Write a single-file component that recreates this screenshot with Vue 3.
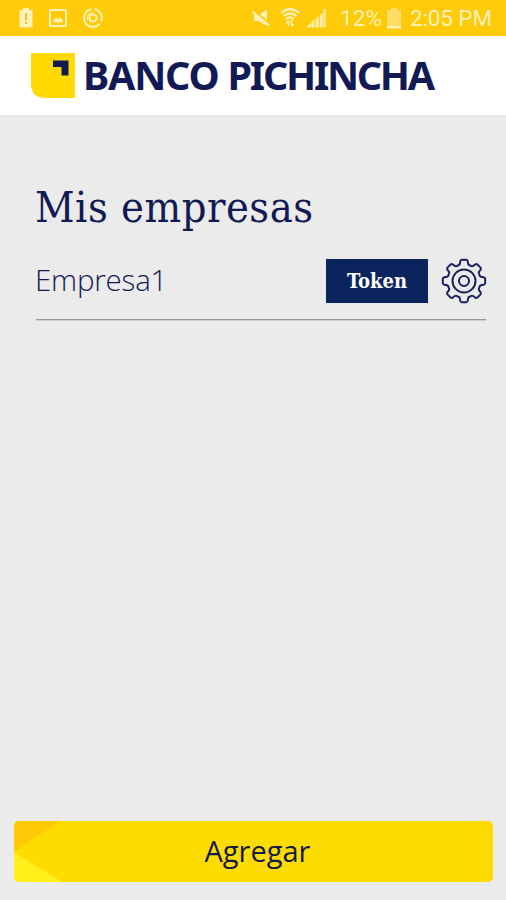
<template>
  <div class="screen">
    <div class="status-bar">
      <div class="status-left">
        <svg width="14" height="20" viewBox="0 0 14 20">
          <path d="M4 0h6v2h3.500v17.500H.5V2H4z" fill="#fff1b8" />
          <path d="M7 5v7M7 14v2" stroke="#e9b400" stroke-width="1.600" />
        </svg>
        <svg width="18" height="18" viewBox="0 0 18 18">
          <rect x="1" y="1" width="16" height="16" rx="1.500" fill="none" stroke="#fff1b8" stroke-width="2" />
          <path d="M4.500 13.500V11l2.500-2.500 2 1.500 2-1.500 2.500 2.500v2.500z" fill="#fff1b8" />
        </svg>
        <svg width="20" height="20" viewBox="0 0 20 20" fill="none" stroke="#fff1b8" stroke-width="2">
          <path d="M8.500 1.200A8.900 8.900 0 1 0 16.800 15.600M18 13.500A8.900 8.900 0 0 0 11.500 1.200" />
          <circle cx="10" cy="10" r="3.500" />
          <path d="M5 12.500a5.500 5.500 0 0 1 5-8" stroke-width="1.200" />
        </svg>
      </div>
      <div class="status-right">
        <svg class="mute" width="19" height="19" viewBox="0 0 19 19">
          <path d="M2 6h4.500L15 .5v16.500l-8.500-5H2z" fill="#fff1b8" />
          <path d="M2 1.500l16 13.500" stroke="#ffca08" stroke-width="2" />
          <path d="M.5 2.500l16.500 14" stroke="#fff1b8" stroke-width="2" />
        </svg>
        <svg class="wifi" width="20" height="20" viewBox="0 0 20 20" fill="none" stroke="#fff1b8" stroke-width="2.200">
          <path d="M1 5q9-7.500 18 0M3.500 8q6.500-5 13 0M6 11q4-3 8 0" />
          <path d="M8.500 18v-5M6.500 15l2-2.200M11.500 12v6M13.500 16l-2 2.200" stroke-width="1.700" />
        </svg>
        <svg class="signal" width="20" height="19" viewBox="0 0 20 19" fill="#fff1b8">
          <path d="M0 18.500V17l4-3v4.500zM4.500 18.500V13l3-2.500v8zM8.500 18.500V9.500l3.300-2v11zM12.700 18.500V6L15.800 4v14.500z" opacity=".9" />
          <path d="M16.300 0H19v18.500h-2.700z" opacity=".75" />
        </svg>
        <span class="percent">12%</span>
        <svg class="battery" width="14" height="21" viewBox="0 0 14 21">
          <path d="M4 0h6v2h4v16H0V2h4z" fill="#ffdd66" />
          <path d="M0 18h14v2.500H0z" fill="#fff1b8" />
        </svg>
        <span class="time">2:05 PM</span>
      </div>
    </div>

    <header class="header">
      <svg class="logo" width="44" height="45" viewBox="0 0 44 45">
        <path d="M0 0h44v45H15Q0 45 0 31z" fill="#ffd900" />
        <path d="M22 7.500h15.500v15H30.500V14H22z" fill="#0f1c54" />
      </svg>
      <span class="brand">BANCO <span class="brand-name">PICHINCHA</span></span>
    </header>

    <main class="content">
      <h1 class="title">Mis empresas</h1>
      <div v-for="company in companies" :key="company" class="company">
        <span class="company-name">{{ company }}</span>
        <button class="token">Token</button>
        <svg class="gear" width="46" height="46" viewBox="-23 -23 46 46" fill="none" stroke="#1b2260" stroke-width="2">
          <path :d="gearPath" stroke-linejoin="round" />
          <circle r="11.500" />
          <circle r="5" />
        </svg>
      </div>
    </main>

    <footer class="footer">
      <button class="add">
        <svg class="add-corner" width="48" height="61" viewBox="0 0 48 61">
          <path d="M0 0h46L0 31z" fill="#ffc907" />
          <path d="M0 31l48 30H0z" fill="#fff01c" />
        </svg>
        <span class="add-label">Agregar</span>
      </button>
    </footer>
  </div>
</template>

<script setup>
const companies = ['Empresa1']

function polar(radius, degrees) {
  const a = (degrees * Math.PI) / 180
  return `${(radius * Math.sin(a)).toFixed(2)} ${(-radius * Math.cos(a)).toFixed(2)}`
}

// Eight teeth joined by rounded valleys
const parts = []
for (let i = 0; i < 8; i++) {
  const t = i * 45
  parts.push(`${i ? 'L' : 'M'}${polar(20, t - 11)}`)
  parts.push(`Q${polar(21.3, t - 9.5)} ${polar(21.3, t - 6)}`)
  parts.push(`L${polar(21.3, t + 6)}`)
  parts.push(`Q${polar(21.3, t + 9.5)} ${polar(20, t + 11)}`)
  parts.push(`Q${polar(16, t + 14)} ${polar(16.7, t + 22.5)}`)
  parts.push(`Q${polar(16, t + 31)} ${polar(20, t + 34)}`)
}
const gearPath = parts.join('') + 'Z'
</script>

<style>
body {
  margin: 0;
}
</style>

<style scoped>
.screen {
  display: flex;
  flex-direction: column;
  width: 506px;
  height: 900px;
  background: #ebebeb;
  color: #111a54;
  overflow: hidden;
}

.status-bar {
  display: flex;
  justify-content: space-between;
  align-items: center;
  box-sizing: border-box;
  height: 36px;
  padding: 0 14px 0 19px;
  background: #ffca08;
  color: #fff1b8;
  font-family: Roboto, sans-serif;
  font-size: 22.500px;
}

.status-left,
.status-right {
  display: flex;
  align-items: center;
}

.status-left {
  gap: 16px;
}

.wifi {
  margin-left: 9px;
}

.signal {
  margin-left: 7px;
}

.percent {
  margin-left: 13px;
}

.battery {
  margin-left: 5px;
}

.time {
  margin-left: 9px;
  letter-spacing: -0.1px;
}

.header {
  display: flex;
  align-items: center;
  box-sizing: border-box;
  height: 79px;
  padding-left: 31px;
  background: #fff;
}

.logo {
  margin-top: -1px;
}

.brand {
  margin-left: 8px;
  padding-bottom: 2px;
  font-family: 'Noto Sans', sans-serif;
  font-size: 39.500px;
  font-weight: 700;
  letter-spacing: -1.2px;
  line-height: 54px;
  white-space: nowrap;
}

.brand-name {
  letter-spacing: -2.300px;
}

.content {
  flex: 1;
  padding: 66px 20px 0 36px;
}

.title {
  margin: 0 0 0 -1px;
  font-family: 'DejaVu Serif Condensed', 'DejaVu Serif', serif;
  font-size: 43px;
  font-weight: 400;
  letter-spacing: 0.500px;
  line-height: 52px;
  white-space: nowrap;
}

.company {
  display: flex;
  align-items: center;
  box-sizing: border-box;
  height: 87px;
  padding: 9px 0 0;
  border-bottom: 1px solid #98989c;
  box-shadow: 0 1px 0 #d0d0d2;
}

.company-name {
  flex: 1;
  margin: -2px 0 0 -1px;
  font-family: 'Open Sans', sans-serif;
  font-size: 29.500px;
  font-weight: 300;
  letter-spacing: -0.2px;
}

.token {
  width: 102px;
  height: 44px;
  padding: 0;
  border: 0;
  background: #0c245e;
  color: #fff;
  font-family: 'DejaVu Serif Condensed', 'DejaVu Serif', serif;
  font-size: 20px;
  font-weight: 700;
}

.gear {
  margin: 0 -1px 0 13px;
}

.footer {
  padding: 0 13px 18px 14px;
}

.add {
  position: relative;
  display: flex;
  align-items: center;
  justify-content: center;
  width: 100%;
  height: 61px;
  padding: 0;
  border: 0;
  border-radius: 5px;
  background: #ffdc00;
  color: #111a44;
  font-family: 'Open Sans', sans-serif;
  font-size: 29px;
  overflow: hidden;
}

.add-label {
  padding: 0 0 2px 8px;
}

.add-corner {
  position: absolute;
  left: 0;
  top: 0;
}
</style>
